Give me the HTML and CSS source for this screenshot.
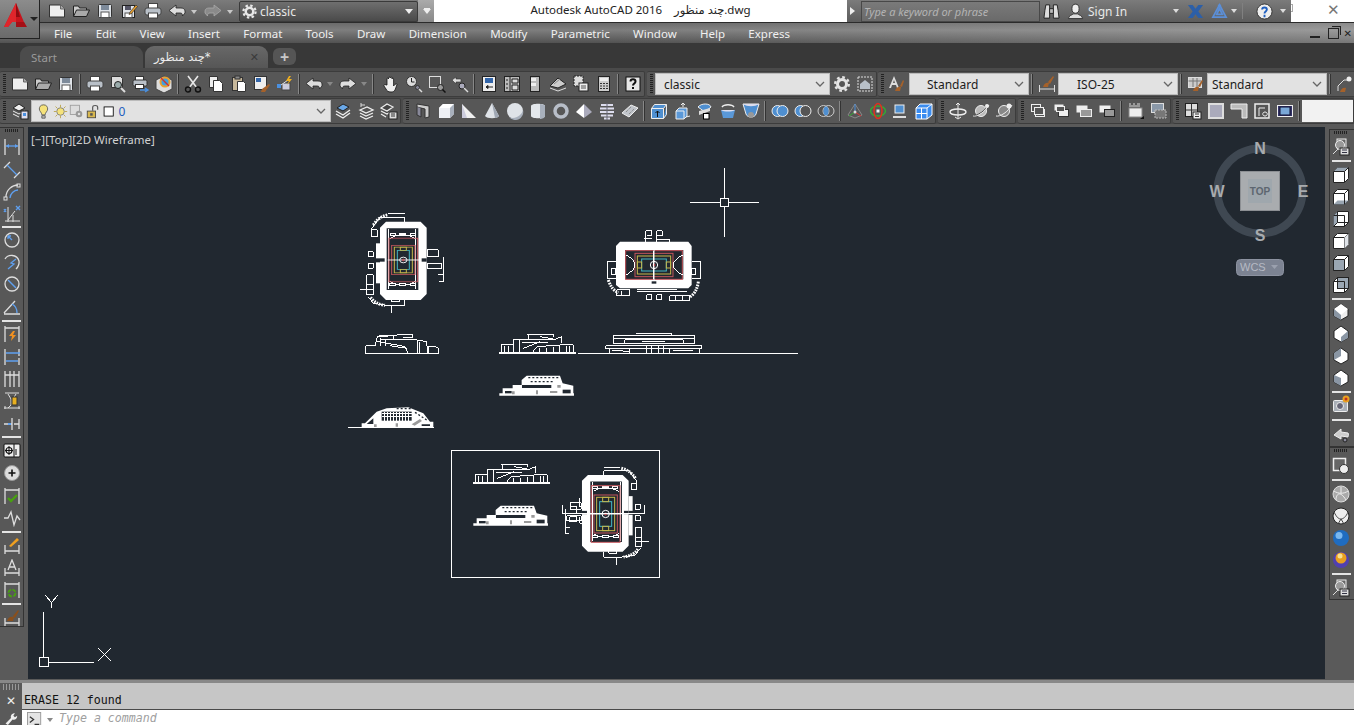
FILE: index.html
```html
<!DOCTYPE html>
<html lang="en">
<head>
<meta charset="utf-8">
<title>Autodesk AutoCAD 2016</title>
<link rel="stylesheet" href="styles.css">
</head>
<body>
<svg class="defs" aria-hidden="true">
  <symbol id="new" viewBox="0 0 18 18"><path d="M1.5 3h11l4 4v8h-15z" fill="#eee" stroke="#333"/><path d="M12.5 3v4h4" fill="#aaa" stroke="#666"/></symbol>
  <symbol id="open" viewBox="0 0 18 18"><path d="M1.500 14V4h5l1 2h7v2" fill="#ccc" stroke="#222"/><path d="M4.500 8h13l-3 6.500h-13z" fill="#aaa" stroke="#222"/></symbol>
  <symbol id="save" viewBox="0 0 18 18"><rect x="2.500" y="2.500" width="13" height="13" rx="1" fill="#dfe3e8" stroke="#333"/><rect x="5" y="3" width="8" height="5" fill="#7d8a9a"/><rect x="5" y="10" width="8" height="5.500" fill="#fff" stroke="#555"/></symbol>
  <symbol id="saveas" viewBox="0 0 18 18"><rect x="2.500" y="3.500" width="12" height="12" fill="#dfe3e8" stroke="#222"/><rect x="5" y="4" width="6" height="4" fill="#556"/><rect x="5" y="11" width="7" height="4.500" fill="#fff" stroke="#555"/><path d="M10 10l6-7 1.500 1.500-6 7-2.500 1z" fill="#e8a030" stroke="#222" stroke-width=".6"/></symbol>
  <symbol id="print" viewBox="0 0 18 18"><rect x="4.500" y="1.500" width="9" height="5" fill="#fff" stroke="#444"/><rect x="1" y="6" width="16" height="7" rx="2" fill="#b9c0c8" stroke="#444"/><rect x="4.500" y="11" width="9" height="5" fill="#fff" stroke="#444"/></symbol>
  <symbol id="undo" viewBox="0 0 18 18"><path d="M8 3L1 8.500l7 5.500v-3h4c2 0 2.500 1 2.500 3l2.500-3V9c0-2-2-3-4-3H8z" fill="#ddd" stroke="#222" stroke-width=".8"/></symbol>
  <symbol id="redo" viewBox="0 0 18 18"><path d="M10 3l7 5.500L10 14v-3H6c-2 0-2.500 1-2.500 3L1 11V9c0-2 2-3 4-3h5z" fill="#ddd" stroke="#222" stroke-width=".8"/></symbol>
  <symbol id="redog" viewBox="0 0 18 18"><path d="M10 3l7 5.500L10 14v-3H6c-2 0-2.500 1-2.500 3L1 11V9c0-2 2-3 4-3h5z" fill="#8a8a8a" stroke="#aaa" stroke-width=".8"/></symbol>
  <symbol id="preview" viewBox="0 0 18 18"><path d="M2.500 1.500h9l2 2v9h-11z" fill="#ddd" stroke="#333"/><circle cx="9" cy="10" r="3.500" fill="#9aa" stroke="#222"/><path d="M12 13l4 4" stroke="#ddd" stroke-width="2"/></symbol>
  <symbol id="plot" viewBox="0 0 18 18"><rect x="3.500" y="1.500" width="8" height="4" fill="#fff" stroke="#333"/><rect x="1" y="5" width="14" height="6" rx="1.500" fill="#b9c0c8" stroke="#333"/><rect x="3.500" y="9.500" width="8" height="4" fill="#fff" stroke="#333"/><path d="M8 15h7M13 13l3 2-3 2" stroke="#4a90e0" stroke-width="1.400" fill="none"/></symbol>
  <symbol id="pub" viewBox="0 0 18 18"><path d="M1 5l8-4 8 4v9l-8 4-8-4z" fill="#ddd" stroke="#444"/><circle cx="10" cy="7" r="5.500" fill="#e8a030"/><circle cx="10" cy="7" r="3.500" fill="#3fa0e0"/><path d="M6 3l8 8" stroke="#c33" stroke-width="1.400"/></symbol>
  <symbol id="cut" viewBox="0 0 18 18"><path d="M4 1l9 12M14 1L5 13" stroke="#e8e8e8" stroke-width="1.600"/><circle cx="4" cy="14.500" r="2.500" fill="none" stroke="#111" stroke-width="1.400"/><circle cx="14" cy="14.500" r="2.500" fill="none" stroke="#111" stroke-width="1.400"/></symbol>
  <symbol id="copy" viewBox="0 0 18 18"><path d="M2.500 1.500h8v11h-8z" fill="#eee" stroke="#333"/><path d="M6.500 5.500h6l3 3v8h-9z" fill="#fff" stroke="#333"/></symbol>
  <symbol id="paste" viewBox="0 0 18 18"><rect x="2.500" y="2.500" width="10" height="13" fill="#c8b89a" stroke="#333"/><rect x="5" y="1" width="5" height="3" fill="#888" stroke="#333"/><path d="M7.500 6.500h6l2 2v8h-8z" fill="#fff" stroke="#333"/></symbol>
  <symbol id="match" viewBox="0 0 18 18"><rect x="1.500" y="1.500" width="12" height="13" fill="#eee" stroke="#333"/><rect x="3" y="3" width="5" height="4" fill="#36a"/><path d="M9 14l7-5 1 1-5 7-4 0z" fill="#a5612a"/></symbol>
  <symbol id="block" viewBox="0 0 18 18"><rect x="1" y="9" width="4" height="4" fill="#4a90e0"/><rect x="6" y="8" width="8" height="7" fill="#ccd" stroke="#444"/><path d="M5 10l7-5" stroke="#ddd"/><path d="M13 1l-3 5h3l-2 4 5-6h-3l2-3z" fill="#f0b020"/></symbol>
  <symbol id="pan" viewBox="0 0 18 18"><path d="M5 10V4c0-1.200 1.500-1.200 1.500 0V3c0-1.200 1.800-1.200 1.800 0v0c0-1.200 1.700-1.200 1.700 0V4c0-1.200 1.600-1.200 1.600 0v7c1-1.500 3-3 3.400-1.500L13 15c-1 1.500-2 2-4 2-3 0-4-1-5-3l-2-3c-.5-1.500 1-2 2-1z" fill="#eee" stroke="#111" stroke-width=".8"/></symbol>
  <symbol id="zoomr" viewBox="0 0 18 18"><circle cx="6.500" cy="6.500" r="5" fill="#ddd" stroke="#333"/><path d="M6.500 3v4h3" stroke="#222" fill="none"/><circle cx="12.500" cy="12.500" r="2" fill="#889" stroke="#333"/><path d="M14 14l3 3" stroke="#ddd" stroke-width="1.500"/></symbol>
  <symbol id="zoomw" viewBox="0 0 18 18"><rect x="1.500" y="1.500" width="11" height="11" fill="none" stroke="#ddd"/><circle cx="12.500" cy="12.500" r="3" fill="#999" stroke="#222"/><path d="M14.500 14.500l3 3" stroke="#111" stroke-width="1.500"/></symbol>
  <symbol id="zoomp" viewBox="0 0 18 18"><path d="M1 5l4-3v2h5v3H5v2z" fill="#ddd" stroke="#333" stroke-width=".6"/><circle cx="11" cy="11" r="3" fill="#aab" stroke="#222"/><path d="M13 13l4 4" stroke="#ddd" stroke-width="1.500"/></symbol>
  <symbol id="props" viewBox="0 0 18 18"><rect x="2.500" y="1.500" width="13" height="15" fill="#eee" stroke="#222"/><rect x="5" y="3" width="8" height="5" fill="#36a"/><path d="M6 12h7M6 12l2-1.500v3z" stroke="#222" fill="#222"/></symbol>
  <symbol id="dc" viewBox="0 0 18 18"><rect x="1.500" y="1.500" width="15" height="15" fill="#bbb" stroke="#222"/><path d="M7 1.500v15M3 5h2M3 9h2M3 13h2M9 4h6v4H9zM9 10h6v5H9z" stroke="#222" fill="#ddd"/></symbol>
  <symbol id="tp" viewBox="0 0 18 18"><rect x="4.500" y="1.500" width="9" height="15" fill="#bbb" stroke="#222"/><rect x="5" y="3" width="5" height="3" fill="#eee"/><rect x="5" y="8" width="5" height="3" fill="#eee"/></symbol>
  <symbol id="sheet" viewBox="0 0 18 18"><path d="M1 11l8-8 8 6-8 4z" fill="#ccc" stroke="#222"/><path d="M1 13l8 3 8-3" stroke="#ddd" fill="none"/><path d="M5 9l6-5" stroke="#888"/></symbol>
  <symbol id="markup" viewBox="0 0 18 18"><rect x="2" y="1" width="9" height="10" fill="#ddd" stroke="#222" stroke-dasharray="2 1"/><rect x="7" y="8" width="9" height="8" fill="#eee" stroke="#222"/><path d="M9 11h5M9 13h5" stroke="#555"/></symbol>
  <symbol id="calc" viewBox="0 0 18 18"><rect x="3.500" y="1.500" width="11" height="15" fill="#ccc" stroke="#222"/><rect x="5" y="3" width="8" height="3" fill="#eee"/><path d="M5 8.500h8M5 11h8M5 13.500h8" stroke="#333" stroke-dasharray="2 1"/></symbol>
  <symbol id="helpb" viewBox="0 0 18 18"><rect x="2" y="2" width="14" height="14" fill="#e8e8e8" stroke="#111"/><path d="M6.500 6.500c0-3 5-3 5 0 0 2-2.500 2-2.500 4M9 12v2" stroke="#111" stroke-width="2" fill="none"/></symbol>
  <symbol id="gear" viewBox="0 0 18 18"><circle cx="9" cy="9" r="4.500" fill="none" stroke="#e4e4e4" stroke-width="3"/><circle cx="9" cy="9" r="6.800" fill="none" stroke="#e4e4e4" stroke-width="2.400" stroke-dasharray="2.700 2.640"/></symbol>
  <symbol id="wsb" viewBox="0 0 18 18"><rect x="2" y="2" width="14" height="14" fill="none" stroke="#ddd" stroke-dasharray="2 1"/><path d="M4 9l5-4 5 4v5H4z" fill="#b8c0c8"/></symbol>
  <symbol id="txst" viewBox="0 0 18 18"><path d="M7 1L2 13h2l1-3h4l1 3h2zM6 8l1-3 1 3z" fill="#ddd"/><path d="M8 16c1-4 4-5 6-4l-1 4zM13 11l3-6 1 1-2 6z" fill="#a5612a"/></symbol>
  <symbol id="dimst" viewBox="0 0 18 18"><path d="M1.500 10v7M16.500 10v7M2 14h14" stroke="#ddd" fill="none"/><path d="M5 12c1-4 4-5 6-4l-1 4zM10 7l5-6 1 1-4 7z" fill="#a5612a"/></symbol>
  <symbol id="tblst" viewBox="0 0 18 18"><rect x="1.500" y="2.500" width="13" height="10" fill="#ccc" stroke="#ddd"/><path d="M1.500 6h13M6 3v9M10 3v9" stroke="#777"/><path d="M6 16c1-4 4-5 6-4l-1 4zM11 11l4-6 1 1-3 6z" fill="#a5612a"/></symbol>
  <symbol id="mlst" viewBox="0 0 18 18"><path d="M2 16V11l6-6h3" stroke="#ddd" fill="none"/><circle cx="13" cy="4" r="2.500" fill="#eee"/><path d="M4 17c1-3 3-5 6-4l-1 4z" fill="#a5612a"/></symbol>
  <symbol id="layp" viewBox="0 0 18 18"><path d="M2 6l6-4 6 4-6 3z" fill="#eee" stroke="#222"/><path d="M2 9l6 3 6-3M2 12l6 3" stroke="#eee" fill="none"/><rect x="10" y="9" width="7" height="8" fill="#dde" stroke="#222"/><rect x="12" y="11" width="3" height="3" fill="#4a90e0"/></symbol>
  <symbol id="bulb" viewBox="0 0 18 18"><path d="M9 1c-4 0-5 3-5 5 0 3 3 4 3 7h4c0-3 3-4 3-7 0-2-1-5-5-5z" fill="#f5e27a" stroke="#555"/><path d="M7 14h4v3H7z" fill="#bbb" stroke="#555"/></symbol>
  <symbol id="sun" viewBox="0 0 18 18"><circle cx="9" cy="9" r="4.500" fill="#f5e27a" stroke="#777"/><path d="M9 1v3M9 14v3M1 9h3M14 9h3M3 3l2 2M13 13l2 2M15 3l-2 2M5 13l-2 2" stroke="#b8a040"/></symbol>
  <symbol id="frz" viewBox="0 0 18 18"><rect x="1.500" y="1.500" width="11" height="11" fill="#ddd" stroke="#999"/><circle cx="12" cy="12" r="4" fill="#999"/><circle cx="12" cy="12" r="1.500" fill="#ddd"/></symbol>
  <symbol id="lock" viewBox="0 0 18 18"><rect x="1.500" y="8.500" width="10" height="8" fill="#d8b850" stroke="#444"/><path d="M8 8V4c0-3 6-3 6 0v3" fill="none" stroke="#555" stroke-width="1.400"/><rect x="5" y="11" width="3" height="3" fill="#555"/></symbol>
  <symbol id="sq" viewBox="0 0 18 18"><rect x="2.500" y="3.500" width="11" height="11" fill="#fff" stroke="#000"/></symbol>
  <symbol id="lay1" viewBox="0 0 18 18"><path d="M3 6l6-4 6 3-6 4z" fill="#6aa8e8" stroke="#222"/><path d="M2 9l7 4 7-5M2 12l7 4 7-5" stroke="#eee" stroke-width="1.400" fill="none"/></symbol>
  <symbol id="lay2" viewBox="0 0 18 18"><path d="M4 3h4M4 1v4" stroke="#ddd"/><path d="M3 8l7-3 6 3-7 3zM3 11l6 3 7-3M3 14l6 3 7-3" stroke="#eee" stroke-width="1.300" fill="#555"/></symbol>
  <symbol id="lay3" viewBox="0 0 18 18"><path d="M1 6l6-4 6 3-6 4zM1 9l6 3 3-2M1 12l5 3" stroke="#eee" stroke-width="1.200" fill="#444"/><rect x="9" y="10" width="8" height="7" fill="#ddd" stroke="#222"/><path d="M11 12h4M11 14h4" stroke="#333"/></symbol>
  <symbol id="poly" viewBox="0 0 18 18"><path d="M3 2l12 2v11l-4 1V7L3 5z" fill="#ccc" stroke="#333"/><path d="M3 5v8l4 2V6" fill="#889" stroke="#333"/></symbol>
  <symbol id="box" viewBox="0 0 18 18"><path d="M2 6l4-4h11v10l-4 4H2z" fill="#eef0f4"/><path d="M13 6h-11l4-4h11z" fill="#fff"/><path d="M13 6l4-4v10l-4 4z" fill="#a8b0bc"/></symbol>
  <symbol id="wedge" viewBox="0 0 18 18"><path d="M2 2v14h14z" fill="#f0f0f0"/><path d="M2 2l5 14H2z" fill="#ccd"/></symbol>
  <symbol id="cone" viewBox="0 0 18 18"><path d="M9 1L2 14c2 3 12 3 14 0z" fill="#dfe3e8"/><path d="M9 1l3 15c2 0 3-1 4-2z" fill="#a0a8b4"/></symbol>
  <symbol id="sphere" viewBox="0 0 18 18"><circle cx="9" cy="9" r="8" fill="#dfe3e8"/><path d="M3 15a8 8 0 0 0 14-7c-1 5-8 10-14 7z" fill="#a8b0bc"/></symbol>
  <symbol id="cyl" viewBox="0 0 18 18"><path d="M2 4c0-3 14-3 14 0v10c0 3-14 3-14 0z" fill="#e4e8ec"/><path d="M11 2c3 0 5 1 5 2v10c0 2-3 3-5 3z" fill="#a8b0bc"/></symbol>
  <symbol id="torus" viewBox="0 0 18 18"><circle cx="9" cy="9" r="6" fill="none" stroke="#b8bec8" stroke-width="3.500"/></symbol>
  <symbol id="pyr" viewBox="0 0 18 18"><path d="M9 2L1 10l8 6z" fill="#fff"/><path d="M9 2l8 8-8 6z" fill="#aab"/></symbol>
  <symbol id="helix" viewBox="0 0 18 18"><path d="M3 3h12M2 6.500h14M2 10h14M3 13.500h12M6 16.500h6" stroke="#dde" stroke-width="2.200"/><path d="M9 1v17" stroke="#667" stroke-width="1"/></symbol>
  <symbol id="plane" viewBox="0 0 18 18"><path d="M1 11l9-8 7 3-9 9z" fill="#c0c4ca" stroke="#eee"/><path d="M5 10l5-5M8 12l5-5" stroke="#777" stroke-dasharray="1 1"/></symbol>
  <symbol id="ext" viewBox="0 0 18 18"><path d="M1.500 6.500h12v10h-12zM1.500 6.500l3-4h12l-3 4M13.500 16.500l3-4v-10" fill="#4f8fd0" stroke="#eee"/><path d="M7.500 15V9M5.500 11l2-2 2 2" stroke="#111" fill="none"/></symbol>
  <symbol id="press" viewBox="0 0 18 18"><path d="M3 9h8v8H3zM3 9l3-3h8v8l-3 3" fill="#5a98d8" stroke="#eee"/><path d="M10 5V1M8 3l2-2 2 2" stroke="#eee" fill="none"/><path d="M13 15l4-1" stroke="#eee"/></symbol>
  <symbol id="sweep" viewBox="0 0 18 18"><path d="M2 5c3-4 12-4 13 0l-6 5z" fill="#4f8fd0" stroke="#eee"/><path d="M3 9l11-3v3L3 13z" fill="#ddd"/><rect x="7.500" y="11.500" width="5.500" height="5.500" fill="#fff" stroke="#000"/></symbol>
  <symbol id="rev" viewBox="0 0 18 18"><path d="M3 5c2-3 10-3 12 0" fill="none" stroke="#eee" stroke-width="1.500"/><path d="M2 8h14l-2 8H4z" fill="#5a98d8"/><path d="M2 8c3 2 11 2 14 0" fill="#dde"/></symbol>
  <symbol id="loft" viewBox="0 0 18 18"><path d="M1 2h16l-3 10c-1 4-9 4-10 0z" fill="#4f8fd0" stroke="#eee"/><path d="M1 2c4 3 12 3 16 0" fill="#dde"/><circle cx="9" cy="13" r="3" fill="#999"/></symbol>
  <symbol id="uni" viewBox="0 0 18 18"><circle cx="6.500" cy="9" r="5.500" fill="#4f8fd0" stroke="#eee"/><circle cx="11.500" cy="9" r="5.500" fill="#4f8fd0" stroke="#eee"/></symbol>
  <symbol id="subt" viewBox="0 0 18 18"><circle cx="6.500" cy="9" r="5.500" fill="#4f8fd0" stroke="#eee"/><circle cx="11.500" cy="9" r="5.500" fill="#555" stroke="#eee"/></symbol>
  <symbol id="inter" viewBox="0 0 18 18"><circle cx="6.500" cy="9" r="5.500" fill="#555" stroke="#ccc"/><circle cx="11.500" cy="9" r="5.500" fill="none" stroke="#ccc"/><ellipse cx="9" cy="9" rx="2.500" ry="4.500" fill="#4f8fd0"/></symbol>
  <symbol id="axis" viewBox="0 0 18 18"><path d="M9 2L2 13l7 3 7-3z" fill="none" stroke="#888"/><path d="M9 10V2" stroke="#4a90e0"/><path d="M9 10l-6 4" stroke="#3a3"/><path d="M9 10l6 4" stroke="#d33"/><circle cx="9" cy="10" r="1.500" fill="#ddd"/></symbol>
  <symbol id="gizmo" viewBox="0 0 18 18"><ellipse cx="9" cy="9" rx="7.500" ry="5" fill="none" stroke="#3a3" stroke-width="1.500"/><ellipse cx="9" cy="9" rx="4" ry="7.500" fill="none" stroke="#e03020" stroke-width="1.500"/><rect x="7.500" y="7.500" width="3" height="3" fill="#eee"/></symbol>
  <symbol id="bsm" viewBox="0 0 18 18"><rect x="3" y="3" width="9" height="8" fill="#4f8fd0" stroke="#eee"/><path d="M1 15h13" stroke="#ddd" stroke-width="2"/></symbol>
  <symbol id="cubes" viewBox="0 0 18 18"><path d="M1 6h11v11H1zM1 6l4-4h12v11l-5 4" fill="#3a8cf0" stroke="#fff"/><path d="M1 11.500h11M6.500 6v11M12 6l5-4" stroke="#fff" fill="none"/></symbol>
  <symbol id="orb" viewBox="0 0 18 18"><path d="M9 1v15M7 3l2-2 2 2" stroke="#eee" fill="none"/><ellipse cx="9" cy="10" rx="8" ry="3" fill="none" stroke="#eee" stroke-width="1.400"/><path d="M6 15l3 2 3-2" stroke="#eee" fill="none"/></symbol>
  <symbol id="orb2" viewBox="0 0 18 18"><circle cx="9" cy="9" r="5.500" fill="#bbb" stroke="#eee"/><path d="M1 14c4 0 12-5 16-11" stroke="#222" fill="none"/><path d="M1 14c4 1 12-4 16-11" stroke="#eee" fill="none"/><circle cx="15" cy="4" r="2" fill="#eee"/></symbol>
  <symbol id="orb3" viewBox="0 0 18 18"><circle cx="9" cy="9" r="5.500" fill="#888" stroke="#eee"/><path d="M1 14c4 1 12-4 16-11" stroke="#eee" fill="none"/><circle cx="14" cy="4" r="2.500" fill="#eee"/></symbol>
  <symbol id="dr1" viewBox="0 0 18 18"><rect x="2.500" y="2.500" width="9" height="7" fill="#555" stroke="#eee"/><rect x="6.500" y="7.500" width="9" height="7" fill="#555" stroke="#eee"/><rect x="5.500" y="5.500" width="9" height="7" fill="#555" stroke="#eee"/></symbol>
  <symbol id="dr2" viewBox="0 0 18 18"><rect x="2.500" y="2.500" width="9" height="6" fill="#eee"/><rect x="6.500" y="7.500" width="10" height="7" fill="#eee" stroke="#333"/><rect x="4.500" y="4.500" width="8" height="5" fill="#555" stroke="#eee"/></symbol>
  <symbol id="dr3" viewBox="0 0 18 18"><rect x="1.500" y="3.500" width="11" height="7" fill="#eee"/><rect x="5.500" y="7.500" width="11" height="7" fill="#999" stroke="#eee"/></symbol>
  <symbol id="dr4" viewBox="0 0 18 18"><rect x="1.500" y="3.500" width="11" height="7" fill="#eee"/><rect x="6.500" y="7.500" width="10" height="7" fill="#999" stroke="#222"/></symbol>
  <symbol id="abc" viewBox="0 0 18 18"><rect x="2" y="6" width="13" height="9" fill="#eee" stroke="#888"/><path d="M2 2h2M6 2h2M10 2h3M2 4h11" stroke="#ddd"/><path d="M13 17h4v-3z" fill="#111"/></symbol>
  <symbol id="ovl" viewBox="0 0 18 18"><rect x="1.500" y="1.500" width="12" height="9" fill="#8a98a8" stroke="#ddd"/><rect x="5" y="8" width="11" height="8" fill="#777" stroke="#bbb" stroke-dasharray="2 1"/></symbol>
  <symbol id="tbl" viewBox="0 0 18 18"><rect x="1.500" y="1.500" width="12" height="13" fill="#ddd" stroke="#222"/><path d="M7.500 2v12M2 8h11" stroke="#333"/><rect x="9" y="10" width="8" height="7" fill="#eee" stroke="#222"/><path d="M11 12h4M11 14.500h4" stroke="#333"/></symbol>
  <symbol id="sqb" viewBox="0 0 18 18"><rect x="2" y="2" width="14" height="14" fill="#aab" stroke="#ddd" stroke-width="2"/></symbol>
  <symbol id="ell" viewBox="0 0 18 18"><path d="M1 2h16v14h-5V7H1z" fill="#bbb" stroke="#eee"/></symbol>
  <symbol id="frm" viewBox="0 0 18 18"><rect x="2" y="2" width="14" height="14" fill="#555" stroke="#eee" stroke-width="1.500"/><path d="M6 14V6h6M12 14c-3 0-3-4 0-4s3 4 0 4z" stroke="#eee" fill="none"/></symbol>
  <symbol id="frb" viewBox="0 0 18 18"><rect x="1.500" y="3.500" width="15" height="11" fill="#336" stroke="#eee"/><rect x="4" y="5" width="10" height="8" fill="#7aa8d8" stroke="#113"/></symbol>
  <symbol id="dl" viewBox="0 0 18 18"><path d="M2 1v16M16 1v16" stroke="#ddd" stroke-width="1.300"/><path d="M3 8h12" stroke="#5fa0f0" stroke-width="1.300"/><path d="M3 8l3-2v4zM15 8l-3-2v4z" fill="#5fa0f0"/></symbol>
  <symbol id="da" viewBox="0 0 18 18"><path d="M1 7l6-6M11 17l6-6" stroke="#ddd" stroke-width="1.300"/><path d="M4 4l10 10" stroke="#5fa0f0" stroke-width="1.300"/></symbol>
  <symbol id="dar" viewBox="0 0 18 18"><path d="M3 14C3 7 9 2 15 2" stroke="#ddd" fill="none" stroke-width="1.300"/><path d="M7 15c0-4 4-8 8-8" stroke="#5fa0f0" fill="none" stroke-width="1.300"/><rect x="1" y="14" width="3" height="3" fill="none" stroke="#ddd"/><rect x="14" y="1" width="3" height="3" fill="none" stroke="#ddd"/></symbol>
  <symbol id="dor" viewBox="0 0 18 18"><path d="M2 16h15M5 2v15M10 10v7" stroke="#ddd"/><path d="M5 15L12 6" stroke="#ddd"/><path d="M1 4l2 3M1 7l2-3M13 1l4 4M17 1l-4 4" stroke="#5fa0f0" stroke-width="1.300"/></symbol>
  <symbol id="drad" viewBox="0 0 18 18"><circle cx="9" cy="9" r="7" fill="none" stroke="#ddd" stroke-width="1.300"/><path d="M9 9L5 5M5 5l3 0M5 5v3" stroke="#5fa0f0" stroke-width="1.300" fill="none"/></symbol>
  <symbol id="djog" viewBox="0 0 18 18"><path d="M2 6C5 1 14 1 16 8c.5 3-1 6-3 8" fill="none" stroke="#ddd" stroke-width="1.300"/><path d="M13 6L8 10l3 1-6 5" fill="none" stroke="#5fa0f0" stroke-width="1.300"/></symbol>
  <symbol id="ddia" viewBox="0 0 18 18"><circle cx="9" cy="9" r="7" fill="none" stroke="#ddd" stroke-width="1.300"/><path d="M5 5l8 8" stroke="#5fa0f0" stroke-width="1.400"/></symbol>
  <symbol id="dang" viewBox="0 0 18 18"><path d="M1 15L12 3M1 16h16" stroke="#ddd" stroke-width="1.300"/><path d="M9 6c4 2 5 6 5 9" fill="none" stroke="#5fa0f0" stroke-width="1.300"/></symbol>
  <symbol id="dq" viewBox="0 0 18 18"><path d="M2 1v16M16 1v16M2 3h14" stroke="#ddd" stroke-width="1.300"/><path d="M10 6L6 11h3l-1 5 5-6h-3l2-4z" fill="#f09020"/></symbol>
  <symbol id="db" viewBox="0 0 18 18"><path d="M2 1v16M16 1v7M16 10v7" stroke="#ddd" stroke-width="1.300"/><path d="M3 5h14M3 13h12" stroke="#5fa0f0" stroke-width="1.300"/></symbol>
  <symbol id="dc2" viewBox="0 0 18 18"><path d="M2 1v16M7 1v16M11 1v16M16 1v16M2 5h14" stroke="#ddd" stroke-width="1.300"/></symbol>
  <symbol id="dsp" viewBox="0 0 18 18"><path d="M2 1h14M1 16h16M2 14v3M16 14v3M5 2l3 5v6l-3 3M13 2l-3 5v6" stroke="#ddd" fill="none"/><rect x="9" y="5" width="5" height="8" fill="#e8b020" stroke="#333"/></symbol>
  <symbol id="dbk" viewBox="0 0 18 18"><path d="M1 9h8M9 3v12M11 9h5M16 4v10" stroke="#ddd" stroke-width="1.300"/><path d="M5 9h3" stroke="#5fa0f0" stroke-width="2"/></symbol>
  <symbol id="dtol" viewBox="0 0 18 18"><rect x="1" y="2" width="16" height="13" rx="1" fill="#eee" stroke="#111"/><path d="M11 2v13" stroke="#111"/><circle cx="6" cy="8.500" r="3" fill="none" stroke="#111" stroke-width="1.200"/><path d="M6 4v9M2 8.500h8M13 13v-6" stroke="#111"/></symbol>
  <symbol id="dcen" viewBox="0 0 18 18"><circle cx="9" cy="9" r="7.500" fill="#ddd" stroke="#999"/><path d="M9 5.500v7M5.500 9h7" stroke="#111" stroke-width="1.600"/></symbol>
  <symbol id="dins" viewBox="0 0 18 18"><path d="M2 1v16M16 1v16M2 3h14" stroke="#ddd" stroke-width="1.300"/><path d="M5 11l3 3 6-6" stroke="#48a010" stroke-width="2.400" fill="none"/></symbol>
  <symbol id="dbr" viewBox="0 0 18 18"><path d="M1 9h4l3-6 3 13 3-9 3 4" stroke="#ddd" stroke-width="1.300" fill="none"/></symbol>
  <symbol id="dpen" viewBox="0 0 18 18"><path d="M2 8v9M16 8v9M2 14h14" stroke="#ddd" stroke-width="1.300"/><path d="M6 9l8-8 2 2-8 7z" fill="#f0a020"/></symbol>
  <symbol id="dtxt" viewBox="0 0 18 18"><path d="M2 9v8M16 9v8M2 14h14" stroke="#ddd" stroke-width="1.300"/><path d="M5 11L9 1l4 10M6.500 8h5" stroke="#ddd" stroke-width="1.300" fill="none"/></symbol>
  <symbol id="dupd" viewBox="0 0 18 18"><path d="M2 1v16M16 1v16M2 3h14" stroke="#ddd" stroke-width="1.300"/><circle cx="9" cy="12" r="3.500" fill="none" stroke="#48a010" stroke-width="1.800" stroke-dasharray="4 1.500"/></symbol>
  <symbol id="dbrs" viewBox="0 0 18 18"><path d="M2 9v8M16 9v8M2 14h14" stroke="#ddd" stroke-width="1.300"/><path d="M4 12c1-4 4-5 7-4l-1 4zM10 7l5-6 1 1-4 7z" fill="#8a4f1c"/></symbol>
  <symbol id="vp" viewBox="0 0 18 18"><rect x="5" y="1" width="9" height="9" fill="#666" stroke="#eee"/><circle cx="8" cy="7" r="4.500" fill="#999" stroke="#eee"/><path d="M1 16l5-5" stroke="#ddd"/><rect x="8" y="10" width="9" height="7" fill="#ddd" stroke="#222"/><path d="M10 12h5M10 14.500h5" stroke="#334"/></symbol>
  <symbol id="c1" viewBox="0 0 18 18"><path d="M1.500 5.500l4-4h11v11l-4 4h-11z" fill="#fff" stroke="#222"/><path d="M5.500 1.500h11l-4 4h-11z" fill="#9aa6b2"/><path d="M1.500 5.500h11v11M12.500 5.500l4-4" fill="none" stroke="#222"/></symbol>
  <symbol id="c2" viewBox="0 0 18 18"><path d="M1.500 5.500l4-4h11v11l-4 4h-11z" fill="#fff" stroke="#222"/><path d="M5.500 12.500h11l-4 4h-11z" fill="#9aa6b2"/><path d="M1.500 5.500h11v11M12.500 5.500l4-4" fill="none" stroke="#222"/></symbol>
  <symbol id="c3" viewBox="0 0 18 18"><path d="M1.500 5.500l4-4h11v11l-4 4h-11z" fill="#fff" stroke="#222"/><path d="M1.500 5.500l4-4v11l-4 4z" fill="#9aa6b2"/><path d="M5.500 1.500v11h11M5.500 12.500l-4 4M1.500 5.500h11v11" fill="none" stroke="#222"/></symbol>
  <symbol id="c4" viewBox="0 0 18 18"><path d="M1.500 5.500l4-4h11v11l-4 4h-11z" fill="#fff" stroke="#222"/><path d="M1.500 5.500h11v11M12.500 5.500l4-4" fill="none" stroke="#222"/><path d="M16.500 1.500l-4 4v11l4-4z" fill="#dfe3e8"/></symbol>
  <symbol id="c5" viewBox="0 0 18 18"><path d="M1.500 5.500l4-4h11v11l-4 4h-11z" fill="#fff" stroke="#222"/><path d="M1.500 5.500h11v11h-11z" fill="#9aa6b2" stroke="#222"/><path d="M12.500 5.500l4-4" fill="none" stroke="#222"/></symbol>
  <symbol id="c6" viewBox="0 0 18 18"><path d="M1.500 5.500l4-4h11v11l-4 4h-11z" fill="#fff" stroke="#222"/><rect x="5.500" y="1.500" width="11" height="11" fill="#9aa6b2" stroke="#222"/><path d="M1.500 5.500h11v11" fill="none" stroke="#222"/></symbol>
  <symbol id="iso1" viewBox="0 0 18 18"><path d="M9 1l7 5v7l-7 4-7-4V6z" fill="#eee" stroke="#222"/><path d="M9 1L2 6l7 6 7-6z" fill="#fff"/><path d="M2 6v7l7 4v-5z" fill="#8a96a4"/></symbol>
  <symbol id="iso2" viewBox="0 0 18 18"><path d="M9 1l7 5v7l-7 4-7-4V6z" fill="#fff" stroke="#222"/><path d="M16 6v7l-7 4v-5z" fill="#8a96a4"/></symbol>
  <symbol id="iso3" viewBox="0 0 18 18"><path d="M9 1l7 5v7l-7 4-7-4V6z" fill="#fff" stroke="#222"/><path d="M9 1L2 6v7l7-4z" fill="#8a96a4"/></symbol>
  <symbol id="iso4" viewBox="0 0 18 18"><path d="M9 1l7 5v7l-7 4-7-4V6z" fill="#fff" stroke="#222"/><path d="M2 6l7 3v8l-7-4z" fill="#8a96a4"/></symbol>
  <symbol id="cam" viewBox="0 0 18 18"><rect x="1.500" y="5.500" width="14" height="11" rx="1" fill="#aab0b8" stroke="#eee"/><circle cx="8" cy="11" r="3.500" fill="#667" stroke="#eee"/><circle cx="14" cy="4" r="3.500" fill="#e8a020"/><circle cx="14" cy="4" r="1.500" fill="#c03020"/></symbol>
  <symbol id="arr" viewBox="0 0 18 18"><path d="M2 9l7-6v3l7 1c1 1 0 4 0 4L9 10v3z" fill="#ccc" stroke="#eee"/><circle cx="13" cy="14" r="2" fill="#889" stroke="#222"/></symbol>
  <symbol id="shade" viewBox="0 0 18 18"><rect x="1.500" y="1.500" width="12" height="12" fill="#666" stroke="#eee" stroke-width="1.500"/><circle cx="12" cy="12" r="4.500" fill="#eee" stroke="#333"/></symbol>
  <symbol id="sw" viewBox="0 0 18 18"><circle cx="9" cy="9" r="8" fill="#aaa" stroke="#ddd"/><path d="M2 6c4 3 10 3 14 0M4 15c0-6 4-10 10 0M9 2v6" stroke="#eee" fill="none"/></symbol>
  <symbol id="sh" viewBox="0 0 18 18"><circle cx="9" cy="9" r="8" fill="#eee" stroke="#222"/><path d="M2 5c3 6 5 7 7 7s5-2 7-7M9 12l-3 5M9 12l3 5" stroke="#444" fill="none"/></symbol>
  <symbol id="sb" viewBox="0 0 18 18"><circle cx="9" cy="9" r="8" fill="#1f6cc0"/><circle cx="7" cy="6.500" r="3.500" fill="#7ab8f0"/></symbol>
  <symbol id="sy" viewBox="0 0 18 18"><circle cx="9" cy="9" r="8" fill="#5040b0"/><circle cx="9" cy="7" r="5.500" fill="#e8a020"/><circle cx="8" cy="5" r="2.500" fill="#f8e090"/></symbol>
  <symbol id="chev" viewBox="0 0 10 10"><path d="M1 3l4 4 4-4" fill="none" stroke="#666" stroke-width="1.300"/></symbol>
  <symbol id="gearw" viewBox="0 0 18 18"><circle cx="9" cy="9" r="4.500" fill="none" stroke="#e8e8e8" stroke-width="3"/><circle cx="9" cy="9" r="7.300" fill="none" stroke="#e8e8e8" stroke-width="2.600" stroke-dasharray="2.900 2.830"/></symbol>
  <symbol id="bino" viewBox="0 0 18 18"><path d="M2 8l1-6h4v14H1zM16 8l-1-6h-4v14h6z" fill="#ddd" stroke="#222"/><path d="M7 6h4v5H7z" fill="#bbb" stroke="#222"/></symbol>
  <symbol id="user" viewBox="0 0 18 18"><ellipse cx="9" cy="6" rx="3.800" ry="4.800" fill="#eee" stroke="#333"/><path d="M1.500 16.500c0-3 4-4 5.500-5h4c1.500 1 5.500 2 5.500 5z" fill="#ddd" stroke="#333"/></symbol>
  <symbol id="xlogo" viewBox="0 0 18 18"><path d="M1 2h5l3 4 3-4h5l-5 7 5 7h-5l-3-4-3 4H1l5-7z" fill="#2c5fa8"/></symbol>
  <symbol id="a360" viewBox="0 0 18 18"><path d="M9 2L2 15h14zM9 6l-3 6h6z" fill="none" stroke="#5b8fd8" stroke-width="1.800"/><circle cx="9" cy="3" r="1.800" fill="#5b8fd8"/></symbol>
  <symbol id="help" viewBox="0 0 18 18"><circle cx="9" cy="9" r="8" fill="#eee" stroke="#333"/><path d="M6.500 7c0-3 5-3 5 0 0 2-2.500 2-2.500 4M9 12.500V15" stroke="#1f5fc0" stroke-width="2" fill="none"/></symbol>
  <symbol id="prompt" viewBox="0 0 18 18"><rect x=".5" y=".5" width="14" height="16" fill="#e4e4e4" stroke="#999"/><path d="M3 5l4 3-4 3M8 13h5" stroke="#333" fill="none" stroke-width="1.300"/></symbol>
</svg>

<div class="app">
  <div class="logo">
    <svg class="logo-a" viewBox="0 0 24 25"><path d="M12 0L0 24h4l4-5h4v5h10z" fill="#c8141c"/><path d="M12 0v19H8L4 24H0z" fill="#e0252b"/><path d="M12 0l4 14h-4z" fill="#8e0c12"/><path d="M12 19h8l3 5H12z" fill="#a50f16"/></svg>
    <span class="logo-drop"></span>
  </div>

  <header class="titlebar">
    <div class="qat">
      <svg class="qi"><use href="#new"/></svg>
      <svg class="qi"><use href="#open"/></svg>
      <svg class="qi"><use href="#save"/></svg>
      <svg class="qi"><use href="#saveas"/></svg>
      <svg class="qi"><use href="#print"/></svg>
      <svg class="qi"><use href="#undo"/></svg>
      <span class="qdrop"></span>
      <svg class="qi"><use href="#redog"/></svg>
      <span class="qdrop"></span>
      <div class="wscombo">
        <svg class="wsgear"><use href="#gearw"/></svg>
        <span class="wsname">classic</span>
        <span class="wsarrow"></span>
      </div>
      <div class="qatmore"><span class="wsarrow"></span></div>
    </div>
    <div class="doctitle">Autodesk AutoCAD 2016 &nbsp;&nbsp; <bdi dir="ltr">چند منظور.dwg</bdi></div>
    <div class="infocenter">
      <span class="tri"></span>
      <div class="search">Type a keyword or phrase</div>
      <svg class="ii bino"><use href="#bino"/></svg>
      <svg class="ii"><use href="#user"/></svg>
      <span class="signin">Sign In</span>
      <span class="idrop"></span>
      <svg class="ii x"><use href="#xlogo"/></svg>
      <svg class="ii"><use href="#a360"/></svg>
      <span class="idrop"></span>
      <span class="isep"></span>
      <svg class="ii"><use href="#help"/></svg>
      <span class="idrop last"></span>
    </div>
    <div class="winctl"><span class="restoreghost"></span><span class="closex">✕</span></div>
  </header>

  <nav class="menubar">
    <span class="m">File</span><span class="m">Edit</span><span class="m">View</span><span class="m">Insert</span><span class="m">Format</span><span class="m">Tools</span><span class="m">Draw</span><span class="m">Dimension</span><span class="m">Modify</span><span class="m">Parametric</span><span class="m">Window</span><span class="m">Help</span><span class="m">Express</span>
    <div class="docctl"><span class="dmin"></span><span class="drest"></span><span class="dclose">✕</span></div>
  </nav>

  <div class="tabs">
    <div class="tab start">Start</div>
    <div class="tab active"><span>چند منظور*</span><span class="tabx">✕</span></div>
    <div class="tab plus">+</div>
  </div>

  <div class="tbrow one">
    <div class="group g1">
      <span class="grip"></span>
      <svg class="i"><use href="#new"/></svg><svg class="i"><use href="#open"/></svg><svg class="i"><use href="#save"/></svg><span class="sep"></span>
      <svg class="i"><use href="#print"/></svg><svg class="i"><use href="#preview"/></svg><svg class="i"><use href="#plot"/></svg><svg class="i"><use href="#pub"/></svg><span class="sep"></span>
      <svg class="i"><use href="#cut"/></svg><svg class="i"><use href="#copy"/></svg><svg class="i"><use href="#paste"/></svg><svg class="i"><use href="#match"/></svg><svg class="i"><use href="#block"/></svg><span class="sep"></span>
      <svg class="i"><use href="#undo"/></svg><span class="drop"></span><svg class="i"><use href="#redo"/></svg><span class="drop"></span><span class="sep wide"></span>
      <svg class="i"><use href="#pan"/></svg><svg class="i"><use href="#zoomr"/></svg><svg class="i"><use href="#zoomw"/></svg><svg class="i"><use href="#zoomp"/></svg><span class="sep"></span>
      <svg class="i"><use href="#props"/></svg><svg class="i"><use href="#dc"/></svg><svg class="i"><use href="#tp"/></svg><svg class="i"><use href="#sheet"/></svg><svg class="i"><use href="#markup"/></svg><svg class="i"><use href="#calc"/></svg><span class="sep"></span>
      <svg class="i"><use href="#helpb"/></svg>
    </div>
    <div class="group g2">
      <span class="grip"></span>
      <div class="combo ws"><span>classic</span><svg class="chev"><use href="#chev"/></svg></div>
      <svg class="i"><use href="#gear"/></svg><svg class="i"><use href="#wsb"/></svg>
    </div>
    <div class="group g3">
      <span class="grip"></span>
      <svg class="i"><use href="#txst"/></svg>
      <div class="combo st a"><span>Standard</span><svg class="chev"><use href="#chev"/></svg></div>
      <span class="sep"></span>
      <svg class="i"><use href="#dimst"/></svg>
      <div class="combo st b"><span>ISO-25</span><svg class="chev"><use href="#chev"/></svg></div>
      <span class="sep"></span>
      <svg class="i"><use href="#tblst"/></svg>
      <div class="combo st c"><span>Standard</span><svg class="chev"><use href="#chev"/></svg></div>
      <span class="sep"></span>
      <svg class="i"><use href="#mlst"/></svg>
    </div>
  </div>

  <div class="tbrow two">
    <div class="group">
      <span class="grip"></span>
      <svg class="i"><use href="#layp"/></svg>
      <div class="combo layer">
        <svg class="li"><use href="#bulb"/></svg><svg class="li"><use href="#sun"/></svg><svg class="li"><use href="#frz"/></svg><svg class="li"><use href="#lock"/></svg><svg class="li"><use href="#sq"/></svg>
        <span class="layname">0</span>
        <svg class="chev"><use href="#chev"/></svg>
      </div>
      <svg class="i"><use href="#lay1"/></svg><svg class="i"><use href="#lay2"/></svg><svg class="i"><use href="#lay3"/></svg>
    </div>
    <div class="group">
      <span class="grip"></span>
      <svg class="i"><use href="#poly"/></svg><svg class="i"><use href="#box"/></svg><svg class="i"><use href="#wedge"/></svg><svg class="i"><use href="#cone"/></svg><svg class="i"><use href="#sphere"/></svg><svg class="i"><use href="#cyl"/></svg><svg class="i"><use href="#torus"/></svg><svg class="i"><use href="#pyr"/></svg><svg class="i"><use href="#helix"/></svg><svg class="i"><use href="#plane"/></svg><span class="sep"></span>
      <svg class="i"><use href="#ext"/></svg><svg class="i"><use href="#press"/></svg><svg class="i"><use href="#sweep"/></svg><svg class="i"><use href="#rev"/></svg><svg class="i"><use href="#loft"/></svg><span class="sep"></span>
      <svg class="i"><use href="#uni"/></svg><svg class="i"><use href="#subt"/></svg><svg class="i"><use href="#inter"/></svg><span class="sep"></span>
      <svg class="i"><use href="#axis"/></svg><svg class="i"><use href="#gizmo"/></svg><svg class="i"><use href="#bsm"/></svg><svg class="i"><use href="#cubes"/></svg>
    </div>
    <div class="group">
      <span class="grip"></span>
      <svg class="i"><use href="#orb"/></svg><svg class="i"><use href="#orb2"/></svg><svg class="i"><use href="#orb3"/></svg>
    </div>
    <div class="group">
      <span class="grip"></span>
      <svg class="i"><use href="#dr1"/></svg><svg class="i"><use href="#dr2"/></svg><svg class="i"><use href="#dr3"/></svg><svg class="i"><use href="#dr4"/></svg><span class="sep"></span>
      <svg class="i"><use href="#abc"/></svg><svg class="i"><use href="#ovl"/></svg>
    </div>
    <div class="group last">
      <span class="grip"></span>
      <svg class="i"><use href="#tbl"/></svg><svg class="i"><use href="#sqb"/></svg><svg class="i"><use href="#ell"/></svg><svg class="i"><use href="#frm"/></svg><svg class="i"><use href="#frb"/></svg><span class="sep"></span>
      <div class="blank"></div>
    </div>
  </div>

  <main class="workspace">
    <aside class="vbar left">
      <span class="hgrip"></span>
      <svg class="v"><use href="#dl"/></svg><svg class="v"><use href="#da"/></svg><svg class="v"><use href="#dar"/></svg><svg class="v"><use href="#dor"/></svg><span class="hsep s3"></span>
      <svg class="v"><use href="#drad"/></svg><svg class="v"><use href="#djog"/></svg><svg class="v"><use href="#ddia"/></svg><svg class="v"><use href="#dang"/></svg><span class="hsep"></span>
      <svg class="v"><use href="#dq"/></svg><svg class="v"><use href="#db"/></svg><svg class="v"><use href="#dc2"/></svg><svg class="v"><use href="#dsp"/></svg><svg class="v"><use href="#dbk"/></svg><span class="hsep"></span>
      <svg class="v"><use href="#dtol"/></svg><svg class="v"><use href="#dcen"/></svg><svg class="v"><use href="#dins"/></svg><svg class="v"><use href="#dbr"/></svg><span class="hsep s4"></span>
      <svg class="v"><use href="#dpen"/></svg><svg class="v"><use href="#dtxt"/></svg><svg class="v"><use href="#dupd"/></svg><span class="hsep s4"></span>
      <svg class="v"><use href="#dbrs"/></svg>
    </aside>

    <section class="canvas">
      <div class="viewlabel">[−][Top][2D Wireframe]</div>
      <svg class="drawing" viewBox="28 127 1297 552">
        <defs>
          <g id="pitch" fill="none" stroke-width="3">
            <rect x="-43" y="-85" width="86" height="170" stroke="#c4555c"/>
            <rect x="-35" y="-57" width="70" height="114" stroke="#c4555c"/>
            <rect x="-27" y="-50" width="54" height="100" stroke="#c8b84c"/>
            <rect x="-18" y="-37" width="36" height="74" stroke="#43b7c6"/>
            <rect x="-9" y="-50" width="18" height="13" stroke="#c8b84c"/>
            <rect x="-9" y="37" width="18" height="13" stroke="#c8b84c"/>
            <path d="M-47 0H47" stroke="#fff"/>
            <circle r="11" stroke="#fff"/>
            <circle r="3" fill="#c4555c" stroke="#c4555c"/>
          </g>
          <g id="plan">
            <path fill="#fff" fill-rule="evenodd" d="M138 65H242L260 83V282L242 300H138L120 282V83Z M140 85V270H235V85Z"/>
            <rect x="108" y="130" width="12" height="45" fill="#fff"/>
            <rect x="108" y="187" width="12" height="63" fill="#fff"/>
            <rect x="120" y="175" width="14" height="10" fill="#212830"/>
            <rect x="245" y="175" width="15" height="10" fill="#212830"/>
            <g class="ln">
              <path d="M145 88V268M228 88V268M150 115Q190 92 225 115M150 245Q190 268 225 245"/>
              <path d="M152 100h16v8h-16zM180 100h18v8h-18zM213 100h15v8h-15zM150 250h16v8h-16zM180 250h18v8h-18zM213 250h15v8h-15z"/>
              <path d="M95 110V85L120 52H195V65M145 42H195M95 90H112V110H95ZM85 155H100V170H85ZM85 190H100V205H85ZM80 225H100V285H80ZM80 255H100M60 270H100M85 290L100 310L145 317H195V300M155 295H180V305H155ZM155 317V340M262 150H295V170H262ZM262 190H305V205H262ZM310 170V245H298M295 225H308"/>
            </g>
            <path class="dots" d="M100 75Q115 50 145 44"/>
            <path class="dots" d="M92 292Q105 312 135 316"/>
          </g>
          <path id="e2" class="ln" d="M478 85H707M478 82H707M484 58V84M484 58H520M520 45V84M540 45V80M520 45H640L665 35V55M560 28H640V35M565 28V42M600 35L640 42M575 85L590 65L660 60H700V84M600 70V84M620 70V84M640 65V84M660 62V84M680 62V84M690 62V84M495 62V84M505 62V84M545 52H625M550 70L600 50"/>
          <g id="e4">
            <path fill="#fff" d="M478 212V205H488V190H518V180H545V165L560 152H660L668 175L700 182V205H702V212Z"/>
            <rect x="546" y="180" width="88" height="9" fill="#212830"/>
            <path class="dk" d="M565 158H655M572 170H640"/>
            <rect x="495" y="198" width="20" height="7" fill="#212830"/>
            <rect x="668" y="194" width="24" height="11" fill="#212830"/>
            <path class="gr" d="M516 199h8v9h-8zM588 196h6v12h-6zM630 198h22v6h-22zM652 180h10v8h-10z"/>
          </g>
        </defs>

        <!-- upper left plan -->
        <g transform="translate(340 200) scale(.3333)">
          <use href="#plan"/>
          <use href="#pitch" transform="translate(190 180) scale(1 .77)"/>
        </g>

        <!-- upper right plan -->
        <g transform="translate(590 220) scale(.3333)">
          <path fill="#fff" fill-rule="evenodd" d="M90 65H295L305 78V195L295 205H90L78 195V78Z M105 90V178H280V90Z"/>
          <use href="#pitch" transform="translate(192 135) rotate(90)"/>
          <g class="ln">
            <path d="M108 105Q135 120 135 135Q135 150 108 165M278 105Q250 120 250 135Q250 150 278 165M190 92V178"/>
            <path d="M168 65V32H185V48H170M200 65V32H217V48H202M163 55H185M200 58H240V65"/>
            <path d="M78 125H52V175H78M65 145H78V165H65ZM305 125H332V175H305M305 145H318V165H305Z"/>
            <path d="M80 210H120V228H80ZM95 212V228M140 208H260M140 216H290M170 225H185V240H170ZM200 225H215V240H200ZM240 228H300V243H240ZM258 228V243M278 228V243"/>
          </g>
          <path class="dots" d="M55 180Q65 210 85 218"/>
          <path class="dots" d="M325 185Q320 220 298 232"/>
          <rect x="185" y="184" width="14" height="7" fill="#212830"/>
        </g>

        <!-- elevations -->
        <g transform="translate(340 325) scale(.3333)">
          <path class="ln" d="M78 86H297V72L285 64H262V86M78 86V62H105L112 35H145M118 32H165L175 28H218V38H190M108 48L195 65L205 86M150 62L200 70M120 45H232L260 50V62M232 45V86M240 50V86M122 40V62M138 42V62M162 32V42L218 45M265 65V86"/>
          <use href="#e2"/>
          <path class="ln" d="M714 86H1374M888 26H995V32M820 32H1064V56H820ZM820 40H1064M855 44H1030V56M855 44V56M905 50H975M798 62H1085V72H798ZM810 72V86M1080 72V86M870 72V86M990 72V86M920 62V84M935 60V84M955 60V84M970 60V84M850 80H870M1000 76H1060M815 76H850"/>
          <use href="#e4"/>
          <path class="ln" d="M25 307H282"/>
          <path fill="#fff" d="M65 307V295H75L110 260L140 250L205 247L250 265L270 290H280V307Z"/>
          <rect x="125" y="260" width="90" height="27" fill="#212830"/>
          <path class="ln" d="M125 266H215M125 275H215M134 260V287M143 260V287M152 260V287M161 260V287M170 260V287M179 260V287M188 260V287M197 260V287M206 260V287"/>
          <path class="dk" d="M170 251H215M225 262L260 285"/>
          <path class="gr" d="M102 298h8v8h-8zM167 295h7v10h-7zM215 298L240 282l6 6-22 14z"/>
          <path d="M80 297L100 280V297ZM245 298H270V303H245Z" fill="#212830"/>
        </g>

        <!-- selection frame -->
        <rect x="451.500" y="450.500" width="208" height="127" fill="none" stroke="#fff"/>
        <g transform="translate(314 455) scale(.3333)"><use href="#e2"/><use href="#e4"/></g>
        <g transform="translate(605.300 513.300) scale(-.3333 .327) translate(-190 -182.500)"><use href="#plan"/></g>
        <g transform="translate(445 445) scale(.3333)">
          <use href="#pitch" transform="translate(482 207)"/>
          <path class="ln" d="M352 205H600M352 180V205M598 180V205M375 185H395V205M375 215H395V230H375ZM405 160V185H412M405 215V235H412"/>
        </g>

        <!-- crosshair -->
        <path class="thin" d="M690 202.500H720M729 202.500H759M724.500 168V198M724.500 207V237"/>
        <rect class="thin" x="720.500" y="198.500" width="8" height="8"/>

        <!-- UCS icon -->
        <path class="thin" d="M43.500 612V657M48 662.500H94M98 648L111 661M111 648L98 661M45 595L51.500 602.500L58 595M51.500 602.500V608"/>
        <rect class="thin" x="39.500" y="657.500" width="9" height="9"/>

        <!-- view cube -->
        <circle cx="1260" cy="191" r="42.500" class="vring"/>
        <rect x="1240.500" y="171.500" width="39" height="39" class="vface"/>
        <rect x="1248" y="179" width="24" height="24" class="vinner"/>
        <text x="1260" y="195" class="vtop">TOP</text>
        <text x="1260" y="154" class="vdir">N</text>
        <text x="1217" y="197" class="vdir">W</text>
        <text x="1303" y="197" class="vdir">E</text>
        <text x="1260" y="241" class="vdir">S</text>
        <rect x="1236.500" y="259.500" width="47" height="16" rx="4" class="wcs"/>
        <text x="1240" y="271" class="wcst">WCS</text>
        <path d="M1271 265h7l-3.500 4z" class="wcsa"/>
      </svg>
    </section>

    <aside class="vbar right">
      <div class="rgroup first">
        <span class="hgrip small"></span>
        <svg class="r"><use href="#vp"/></svg><span class="rsep s6"></span>
        <svg class="r"><use href="#c1"/></svg><svg class="r"><use href="#c2"/></svg><svg class="r"><use href="#c3"/></svg><svg class="r"><use href="#c4"/></svg><svg class="r"><use href="#c5"/></svg><svg class="r"><use href="#c6"/></svg><span class="rsep s5"></span>
        <svg class="r"><use href="#iso1"/></svg><svg class="r"><use href="#iso2"/></svg><svg class="r"><use href="#iso3"/></svg><svg class="r"><use href="#iso4"/></svg><span class="rsep s7"></span>
        <svg class="r"><use href="#cam"/></svg><span class="rsep s8"></span>
        <svg class="r"><use href="#arr"/></svg>
      </div>
      <div class="rgroup">
        <span class="hgrip second"></span>
        <svg class="r"><use href="#shade"/></svg><span class="rsep s6"></span>
        <svg class="r"><use href="#sw"/></svg><svg class="r"><use href="#sh"/></svg><svg class="r"><use href="#sb"/></svg><svg class="r"><use href="#sy"/></svg><span class="rsep s6"></span>
        <svg class="r"><use href="#vp"/></svg>
      </div>
    </aside>
  </main>

  <footer class="command">
    <div class="cmdtools">
      <span class="cgrip"></span>
      <span class="cclose">✕</span>
      <svg class="cwrench" viewBox="0 0 18 18"><path d="M2 16l7-7c-1-3 1-6 5-6l-2 3 2 2 3-2c0 4-3 6-6 5l-6 7z" fill="#eee"/></svg>
    </div>
    <div class="cmdmain">
      <div class="history">ERASE 12 found</div>
      <div class="cmdinput">
        <svg class="cprompt"><use href="#prompt"/></svg>
        <span class="cdrop"></span>
        <span class="cph">Type a command</span>
      </div>
    </div>
  </footer>
</div>
</body>
</html>
```

FILE: styles.css
```css
* { box-sizing: border-box; }
html, body { margin: 0; padding: 0; }
body { width: 1354px; height: 725px; overflow: hidden; background: #555; font-family: "Noto Sans", "DejaVu Sans", sans-serif; font-size: 12px; }
.defs { position: absolute; width: 0; height: 0; }
.app { position: relative; width: 1354px; height: 725px; display: flex; flex-direction: column; overflow: hidden; }

/* application button */
.logo { position: absolute; left: 0; top: 0; width: 40px; height: 39px; z-index: 2; background: linear-gradient(#8c8c8c, #6a6a6a); border-right: 1px solid #222; border-bottom: 1px solid #222; }
.logo-a { position: absolute; left: 4px; top: 3px; width: 24px; height: 25px; }
.logo-drop { position: absolute; left: 30px; top: 17px; border: 4px solid transparent; border-top: 4px solid #222; }

/* title bar */
.titlebar { flex: none; height: 23px; display: flex; border-bottom: 1px solid #2b2b2b; background: linear-gradient(#7b7b7b, #5c5c5c); }
.qat { flex: none; width: 434px; display: flex; align-items: center; padding-left: 45px; }
.qi { flex: none; width: 18px; height: 18px; margin: 0 3px; }
.qdrop { flex: none; width: 12px; height: 4px; margin-top: 1px; position: relative; }
.qdrop::before { content: ""; position: absolute; left: 2px; top: 0; border: 3.500px solid transparent; border-top: 4px solid #c8c8c8; }
.wscombo { flex: none; width: 179px; height: 21px; margin-left: 2px; display: flex; align-items: center; background: linear-gradient(#6f6f6f, #4a4a4a); border: 1px solid #3a3a3a; border-radius: 2px; color: #e8e8e8; }
.wsgear { width: 15px; height: 15px; margin: 0 3px 0 2px; flex: none; }
.wsname { flex: 1; font-size: 12px; }
.wsarrow { width: 0; height: 0; border: 4px solid transparent; border-top: 5px solid #eee; margin: 5px 4px 0 0; }
.qatmore { flex: none; width: 17px; height: 22px; display: flex; justify-content: center; align-items: center; background: linear-gradient(#aaa, #888); }
.qatmore .wsarrow { margin: 4px 0 0; box-shadow: 0 -2px 0 -1px #eee; }
.doctitle { flex: none; width: 413px; background: #fff; color: #222; text-align: center; font-size: 11.500px; line-height: 20px; white-space: nowrap; }
.infocenter { flex: none; width: 444px; display: flex; align-items: center; color: #e8e8e8; }
.tri { flex: none; width: 14px; height: 8px; position: relative; }
.tri::before { content: ""; position: absolute; left: 3px; top: 0; border: 4px solid transparent; border-left: 5px solid #eee; }
.search { flex: none; width: 179px; height: 21px; line-height: 19px; padding-left: 2px; background: linear-gradient(#7a7a7a, #6a6a6a); border: 1px solid #484848; color: #b4b4b4; font-style: italic; font-size: 11px; white-space: nowrap; }
.ii { flex: none; width: 17px; height: 17px; margin-left: 3px; }
.ii + .ii { margin-left: 7px; }
.ii.x { margin-left: 7px; }
.signin { flex: none; width: 82px; margin-left: 4px; font-size: 12px; white-space: nowrap; }
.idrop { flex: none; width: 7px; height: 4px; margin-left: 3px; position: relative; }
.idrop::before { content: ""; position: absolute; left: 0; top: 0; border: 3px solid transparent; border-top: 4px solid #ddd; }
.idrop.last { margin-left: 7px; }
.isep { flex: none; width: 1px; height: 16px; margin: 0 10px 0 4px; background: #808080; }
.winctl { flex: 1; background: #fff; position: relative; }
.restoreghost { position: absolute; left: 0; top: 4px; width: 2px; height: 8px; border: 1px solid #aaa; border-left: 0; }
.closex { position: absolute; left: 36px; top: 0; color: #777; font-size: 15px; line-height: 20px; font-family: "DejaVu Sans", sans-serif; }

/* menu */
.menubar { flex: none; height: 20px; display: flex; align-items: center; padding-left: 42.300px; color: #f0f0f0; background: linear-gradient(90deg, rgba(255,255,255,0) 45%, rgba(255,255,255,.22)), linear-gradient(#6a6a6a, #7e7e7e 35%, #525252); font-size: 11.500px; }
.m { flex: none; padding: 0 11.670px; white-space: nowrap; }
.docctl { margin-left: auto; display: flex; align-items: center; gap: 5px; padding-right: 2px; }
.dmin { width: 10px; height: 2px; background: #222; margin: 8px 3px 0 0; }
.drest { width: 11px; height: 11px; border: 1px solid #222; box-shadow: 2px -2px 0 -1px #8a8a8a, 3px -3px 0 -1px #222; }
.dclose { color: #222; font-size: 10px; font-weight: 700; font-family: "DejaVu Sans", sans-serif; }

/* tabs */
.tabs { flex: none; height: 25px; display: flex; align-items: flex-end; padding-left: 20px; background: #383838; }
.tab { flex: none; height: 22px; border-radius: 9px 9px 0 0; display: flex; align-items: center; font-size: 11.500px; }
.tab.start { width: 123px; padding-left: 11px; background: #4c4c4c; color: #9a9a9a; }
.tab.active { width: 123px; margin-left: 2px; padding-left: 9px; padding-right: 9px; background: linear-gradient(#686868, #565656); color: #ececec; justify-content: space-between; font-family: "DejaVu Sans", sans-serif; font-size: 11.500px; }
.tabx { color: #3a3a3a; font-weight: 700; font-size: 11px; }
.tab.plus { width: 23px; height: 17px; margin-left: 5px; margin-bottom: 3px; border-radius: 6px; justify-content: center; background: #555; color: #c8c8c8; font-size: 16px; font-weight: 700; }

/* toolbars */
.tbrow { flex: none; display: flex; background: #4a4a4a; }
.tbrow.one { height: 29px; padding-top: 3px; }
.tbrow.two { height: 27px; padding-top: 1px; }
.group { flex: none; display: flex; align-items: center; height: 26px; background: #575757; border: 1px solid #3c3c3c; border-width: 1px 1px 1px 0; border-radius: 2px; margin-right: 2px; }
.group.last { flex: 1; margin-right: 0; }
.g1 { width: 645px; }
.g2 { margin-right: 1px; }
.grip { flex: none; align-self: stretch; width: 8px; margin: 2px 0; background: linear-gradient(#222 50%, transparent 50%) 3px 0 / 3px 2px repeat-y; }
.g3 .grip { width: 6px; }
.i { flex: none; width: 18px; height: 18px; margin: 0 2.500px; }
.drop { flex: none; width: 11px; height: 4px; position: relative; }
.drop::before { content: ""; position: absolute; left: 2px; top: 0; border: 3px solid transparent; border-top: 4px solid #888; }
.sep { flex: none; width: 6px; height: 20px; background: linear-gradient(90deg, transparent 2px, #888 2px, #888 3px, #333 3px, #333 4px, transparent 4px); }
.sep.wide { width: 9px; background-position: center; }
.combo { flex: none; height: 22px; display: flex; align-items: center; background: #e2e2e2; border: 1px solid #bbb; color: #1c1c1c; font-size: 12px; }
.combo > span:first-child { flex: 1; white-space: nowrap; }
.chev { flex: none; width: 10px; height: 10px; margin: 0 4px 0 auto; }
.ws { width: 175px; padding-left: 8px; }
.st { width: 120px; }
.st.a { margin-left: 2px; padding-left: 17px; }
.st.b { padding-left: 18px; }
.st.c { padding-left: 4px; }
.layer { width: 300px; padding-left: 4px; }
.li { flex: none; width: 15px; height: 15px; margin-right: 1.500px; }
.layname { color: #1f5fc0; margin-left: 0; }
.blank { flex: 1; height: 22px; background: #f2f2f2; }

/* workspace */
.workspace { flex: none; height: 556px; display: flex; background: #5a5a5a; padding: 3px 0 1px; }
.vbar.left { flex: none; width: 24px; height: 500px; margin-right: 4px; display: flex; flex-direction: column; align-items: center; background: #585858; border: 1px solid #333; border-width: 1px 1px 1px 0; }
.hgrip { flex: none; width: 14px; height: 7px; margin: 0 0 1px; background: linear-gradient(90deg, #222 50%, transparent 50%) 0 1px / 2px 3px repeat-x; }
.hgrip.small { height: 6px; margin: 0; }
.hgrip.second { height: 7px; margin: 0; }
.v { flex: none; width: 18px; height: 18px; margin: 2.200px 0; }
.hsep { flex: none; width: 19px; height: 2px; margin: 1.500px 0; background: #e4e4e4; }
.hsep.s3 { margin: .5px 0; }
.hsep.s4 { margin: 1.500px 0; }
.canvas { position: relative; flex: none; width: 1297px; height: 552px; background: #212830; overflow: hidden; }
.viewlabel { position: absolute; left: 3px; top: 5px; color: #d2d2d2; font-size: 11.500px; white-space: nowrap; }
.drawing { display: block; width: 1297px; height: 552px; }
.ln { fill: none; stroke: #fff; stroke-width: 3; shape-rendering: crispEdges; }
.dots { fill: none; stroke: #fff; stroke-width: 9; stroke-dasharray: 5 3; }
.dk { fill: none; stroke: #212830; stroke-width: 4; stroke-dasharray: 6 6; }
.gr { fill: #9a9a9a; }
.thin { fill: none; stroke: #fff; stroke-width: 1; shape-rendering: crispEdges; }
.vring { fill: none; stroke: #3f4852; stroke-width: 8; }
.vface { fill: #a9acaf; stroke: #8c8f93; }
.vinner { fill: #9fa7ad; }
.vtop { fill: #5d6670; font-family: "Liberation Sans", sans-serif; font-weight: 700; font-size: 10px; text-anchor: middle; }
.vdir { fill: #a8abae; font-family: "Liberation Sans", sans-serif; font-weight: 700; font-size: 16px; text-anchor: middle; }
.wcs { fill: #7c8392; stroke: #8c92a0; }
.wcst { fill: #b6bac4; font-family: "Liberation Sans", sans-serif; font-size: 11px; }
.wcsa { fill: #9aa0ae; }

.vbar.right { flex: none; width: 29px; display: flex; flex-direction: column; align-items: flex-end; background: #5a5a5a; }
.rgroup { flex: none; width: 25px; padding-right: 2px; display: flex; flex-direction: column; align-items: center; background: #585858; border: 1px solid #333; border-right: 0; }
.rgroup.first { margin-top: 2px; }
.r { flex: none; width: 18px; height: 18px; margin: 2px 0; }
.rsep { flex: none; width: 19px; height: 2px; background: #e4e4e4; }
.rsep.s5 { margin: 1.500px 0; }
.rsep.s6 { margin: 2px 0; }
.rsep.s7 { margin: 1.500px 0 .500px; }
.rsep.s8 { margin: 3.500px 0; }

/* command line */
.command { flex: none; height: 45px; display: flex; background: #5c5c5c; border-top: 3px solid #888; }
.cmdtools { flex: none; width: 22px; display: flex; flex-direction: column; align-items: center; background: #5a5a5a; position: relative; }
.cgrip { flex: none; width: 17px; height: 6px; margin-top: 1px; background: linear-gradient(90deg, #999 50%, transparent 50%) 0 0 / 3px 3px; }
.cclose { flex: none; color: #eee; font-weight: 700; font-size: 12px; line-height: 14px; margin-top: 4px; font-family: "DejaVu Sans", sans-serif; }
.cwrench { flex: none; width: 14px; height: 14px; margin-top: 3px; }
.cmdmain { flex: 1; display: flex; flex-direction: column; }
.history { flex: none; height: 27px; padding: 9px 0 0 2px; background: #c6c6c6; border-bottom: 1px solid #4a4a4a; color: #111; font-family: "DejaVu Sans Mono", monospace; font-size: 11.600px; line-height: 16px; white-space: pre; }
.cmdinput { flex: 1; display: flex; align-items: flex-start; padding: 2px 0 0 5px; background: #fff; }
.cprompt { flex: none; width: 17px; height: 17px; }
.cdrop { flex: none; width: 10px; height: 4px; margin: 6px 0 0 3px; position: relative; }
.cdrop::before { content: ""; position: absolute; left: 0; top: 0; border: 3px solid transparent; border-top: 4px solid #888; }
.cph { margin-left: 2px; color: #a0a0a0; font-family: "DejaVu Sans Mono", monospace; font-style: italic; font-size: 11.600px; line-height: 13px; white-space: pre; }
```
